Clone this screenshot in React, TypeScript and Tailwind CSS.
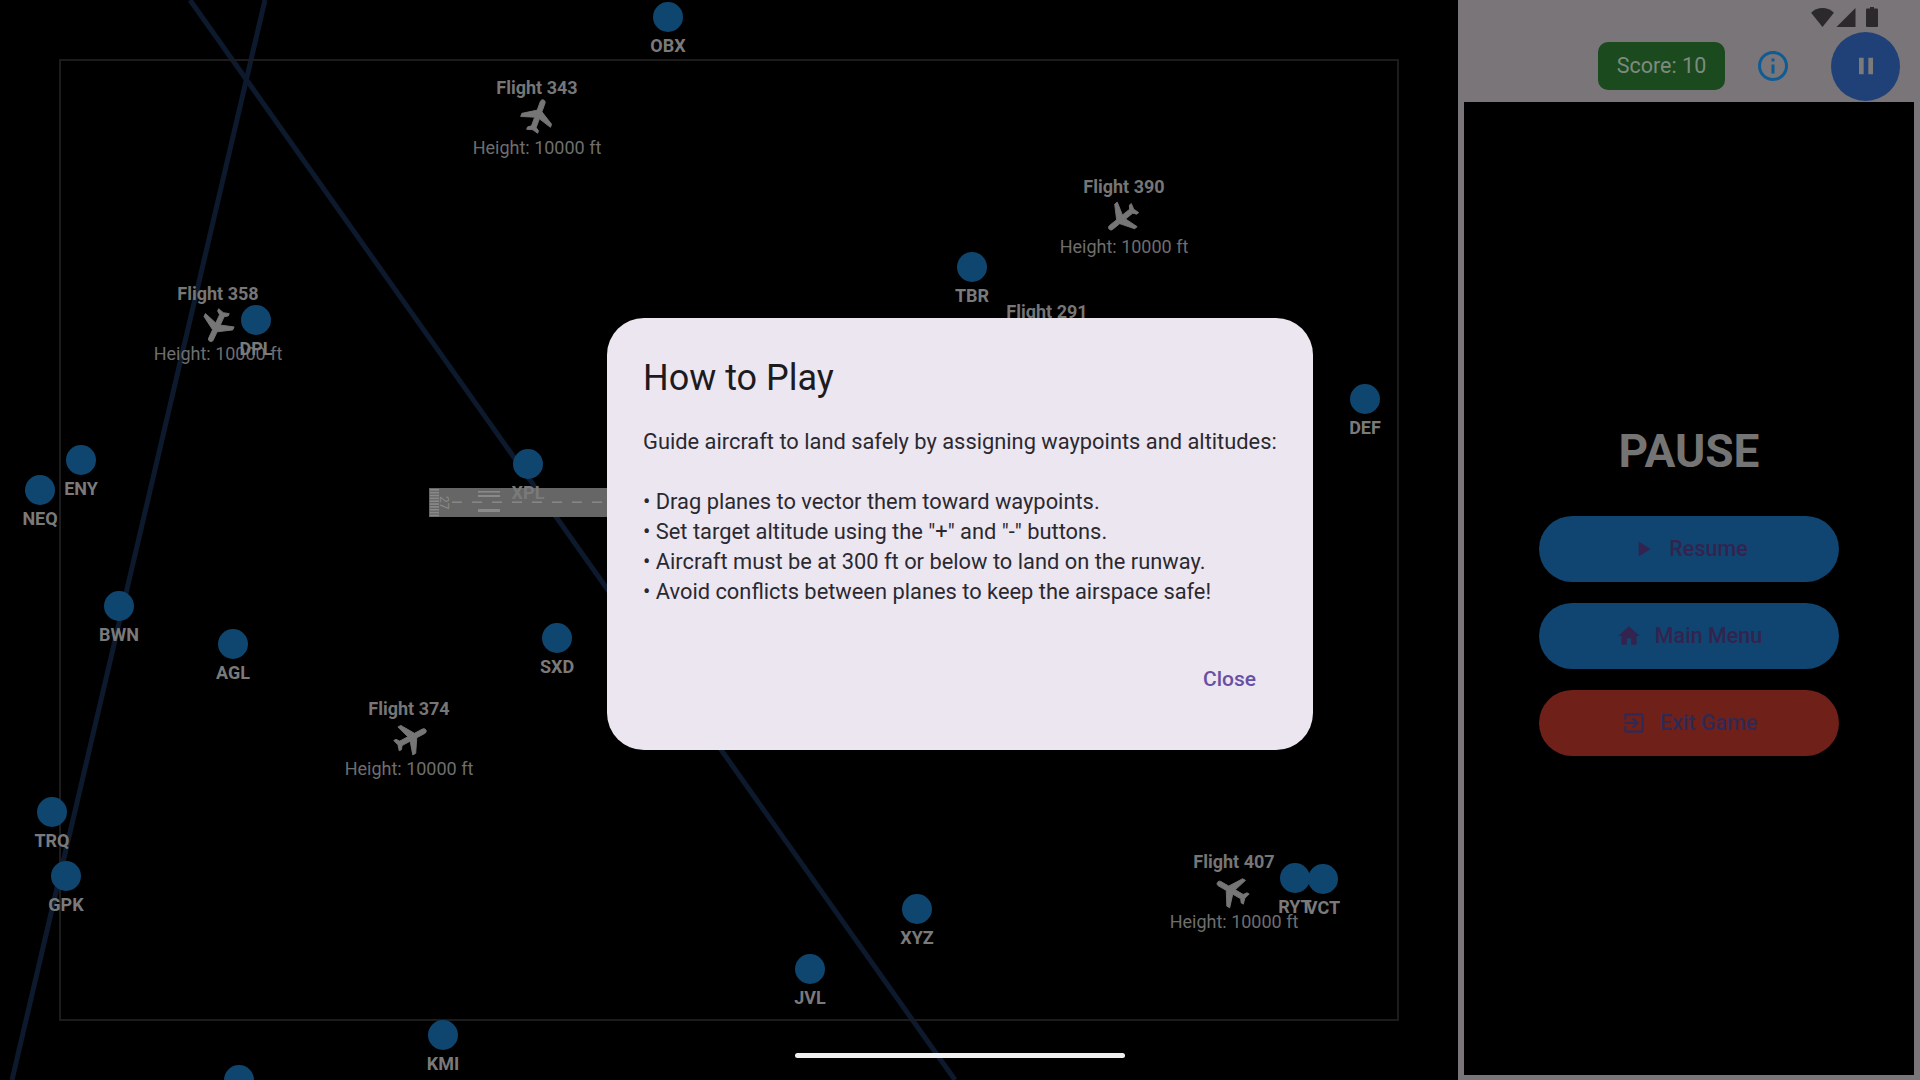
import React from "react";

const waypoints: [string, number, number][] = [
  ["OBX", 668, 17], ["TBR", 972, 267], ["DPL", 256, 320], ["DEF", 1365, 399], ["ENY", 81, 460],
  ["NEQ", 40, 490], ["XPL", 528, 464], ["BWN", 119, 606], ["AGL", 233, 644], ["SXD", 557, 638],
  ["TRQ", 52, 812], ["GPK", 66, 876], ["RYT", 1295, 878], ["VCT", 1323, 879], ["XYZ", 917, 909],
  ["JVL", 810, 969], ["KMI", 443, 1035], ["", 239, 1080],
];

const flights: [string, number, number, number][] = [
  ["Flight 343", 537, 88, 20], ["Flight 390", 1124, 187, 231], ["Flight 358", 218, 294, 205],
  ["Flight 374", 409, 709, 62], ["Flight 407", 1234, 862, 300], ["Flight 291", 1047, 312, 0],
];

const PLANE = "M21 16v-2l-8-5V3.5c0-.83-.67-1.5-1.5-1.5S10 2.67 10 3.5V9l-8 5v2l8-2.5V19l-2 1.5V22l3.5-1 3.5 1v-1.5L13 19v-5.5l8 2.5z";

function Waypoint({ name, x, y }: { name: string; x: number; y: number }) {
  return (
    <div className="absolute flex w-[80px] -translate-x-1/2 flex-col items-center" style={{ left: x, top: y - 15 }}>
      <div className="h-[30px] w-[30px] rounded-full bg-[#0f4670]" />
      <div className="mt-[3.5px] text-[18px] leading-[19px] font-bold text-[#7a7a7a]">{name}</div>
    </div>
  );
}

function Flight({ name, x, y, rot }: { name: string; x: number; y: number; rot: number }) {
  return (
    <div className="absolute flex w-[180px] -translate-x-1/2 flex-col items-center" style={{ left: x, top: y - 10 }}>
      <div className="text-[18px] leading-[20px] font-bold text-[#767676]">{name}</div>
      <svg viewBox="-0.5 1.5 24 24" className="h-[40px] w-[40px] fill-[#767676] stroke-[#767676]" strokeWidth="0.5" style={{ transform: `rotate(${rot}deg)` }}>
        <path d={PLANE} />
      </svg>
      <div className="text-[18px] leading-[20px] text-[#6e6e6e]">Height: 10000 ft</div>
    </div>
  );
}

function Runway() {
  const stripes = [0, 1, 2, 3, 4, 5, 6, 7, 8, 9];
  const dashes = [0, 1, 2, 3, 4, 5, 6, 7];
  return (
    <svg className="absolute top-[488px] left-[429px] h-[29px] w-[180px]" viewBox="0 0 180 29">
      <rect width="180" height="29" fill="#666666" />
      {stripes.map((i) => (
        <rect key={i} x="1" y={1 + i * 2.85} width="9" height="1.6" fill="#8a8a8a" />
      ))}
      <text x="0" y="0" transform="translate(11 8) rotate(90)" fontSize="12" fontFamily="Roboto" fill="#8a8a8a">27</text>
      {dashes.map((i) => (
        <rect key={i} x={23 + i * 20} y="13.5" width="10" height="1.4" fill="#8a8a8a" />
      ))}
      <rect x="49" y="3" width="22" height="1.6" fill="#8a8a8a" />
      <rect x="49" y="7" width="22" height="2" fill="#8a8a8a" />
      <rect x="49" y="21" width="22" height="3" fill="#8a8a8a" />
    </svg>
  );
}

function Btn({ bg, text, label, d }: { bg: string; text: string; label: string; d: string }) {
  return (
    <div className={`flex h-[66px] w-[300px] items-center justify-center gap-[13px] rounded-full ${bg} ${text}`}>
      <svg viewBox="0 0 24 24" className="h-[26px] w-[26px] fill-current"><path d={d} /></svg>
      <span className="pt-[1px] text-[21.5px] font-medium">{label}</span>
    </div>
  );
}

export default function App() {
  return (
    <div className="flex h-[1080px] w-[1920px] overflow-hidden bg-black font-['Roboto',sans-serif]">
      <div className="relative h-full w-[1458px] overflow-hidden bg-black">
        <svg className="absolute inset-0 h-full w-full" viewBox="0 0 1458 1080">
          <line x1="190" y1="0" x2="955" y2="1080" stroke="#0d1a2d" strokeWidth="5" />
          <line x1="265" y1="0" x2="12" y2="1080" stroke="#0d1a2d" strokeWidth="5" />
        </svg>
        <div className="absolute top-[59px] left-[59px] h-[962px] w-[1340px] border-2 border-[#1c1c1c]" />
        <Runway />
        {flights.map(([n, x, y, r]) => <Flight key={n} name={n} x={x} y={y} rot={r} />)}
        {waypoints.map(([n, x, y]) => <Waypoint key={n + x} name={n} x={x} y={y} />)}
      </div>

      <div className="flex h-full w-[462px] flex-col bg-[#797579] px-[6px] pb-[5px]">
        <div className="relative flex h-[102px] items-center justify-end pt-[30px]">
          <div className="absolute top-[7px] right-[36px] flex items-center gap-[2px]">
            <svg viewBox="0 0 24 20" className="h-[19px] w-[23px] fill-[#2b292b]"><path d="M12 20L0 5c3-3 7.5-5 12-5s9 2 12 5z" /></svg>
            <svg viewBox="0 0 20 20" className="h-[19px] w-[20px] fill-[#2b292b]"><path d="M20 0v20H0z" /></svg>
            <svg viewBox="0 0 12 20" className="ml-[8px] h-[20px] w-[12px] fill-[#2b292b]"><path d="M4 0h4v1.500h3a1 1 0 0 1 1 1V19a1 1 0 0 1-1 1H1a1 1 0 0 1-1-1V2.500a1 1 0 0 1 1-1h3z" /></svg>
          </div>
          <div className="flex h-[48px] w-[127px] items-center justify-center rounded-[10px] bg-[#1b4a1e] text-[21.5px] text-[#7f8a7f]">Score: 10</div>
          <svg viewBox="0 0 24 24" className="mr-[40px] ml-[30px] h-[36px] w-[36px] fill-[#0f5c94]">
            <path d="M11 7h2v2h-2zm0 4h2v6h-2zm1-9C6.48 2 2 6.480 2 12s4.480 10 10 10 10-4.480 10-10S17.520 2 12 2zm0 18c-4.410 0-8-3.590-8-8s3.590-8 8-8 8 3.590 8 8-3.590 8-8 8z" />
          </svg>
          <div className="mr-[14px] flex h-[69px] w-[69px] items-center justify-center rounded-full bg-[#1f4178]">
            <svg viewBox="0 0 24 24" className="h-[28px] w-[28px] fill-[#7b7b7b]"><path d="M6 5h4v14H6zm8 0h4v14h-4z" /></svg>
          </div>
        </div>
        <div className="flex flex-1 flex-col items-center justify-center bg-black">
          <div className="mb-[36px] text-[46px] leading-[58px] font-bold text-[#747474]">PAUSE</div>
          <div className="flex flex-col gap-[21px]">
            <Btn bg="bg-[#0f4570]" text="text-[#35234f]" label="Resume" d="M8 5v14l11-7z" />
            <Btn bg="bg-[#0f4570]" text="text-[#35234f]" label="Main Menu" d="M10 20v-6h4v6h5v-8h3L12 3 2 12h3v8z" />
            <Btn bg="bg-[#6f2018]" text="text-[#2f2a55]" label="Exit Game" d="M10.090 15.590L11.500 17l5-5-5-5-1.410 1.410L12.670 11H3v2h9.670l-2.580 2.590zM19 3H5c-1.110 0-2 .9-2 2v4h2V5h14v14H5v-4H3v4c0 1.100.89 2 2 2h14c1.100 0 2-.9 2-2V5c0-1.100-.9-2-2-2z" />
          </div>
        </div>
      </div>

      <div className="absolute inset-0 flex h-[1080px] w-[1920px] items-center justify-center pb-[12px]">
        <div className="flex h-[432px] w-[706px] flex-col rounded-[37px] bg-[#ece6f0] px-[36px] pt-[38px] pb-[55px]">
          <div className="text-[36px] leading-[44px] text-[#1d1b20]">How to Play</div>
          <div className="mt-[27px] text-[21.85px] leading-[30px] text-[#2b2930]">
            <div>Guide aircraft to land safely by assigning waypoints and altitudes:</div>
            <div className="h-[30px]" />
            <div>• Drag planes to vector them toward waypoints.</div>
            <div>• Set target altitude using the "+" and "-" buttons.</div>
            <div>• Aircraft must be at 300 ft or below to land on the runway.</div>
            <div>• Avoid conflicts between planes to keep the airspace safe!</div>
          </div>
          <div className="mt-auto flex justify-end pr-[21px] text-[21px] font-medium text-[#6750a4]">Close</div>
        </div>
      </div>

      <div className="absolute top-[1053px] left-[795px] h-[5px] w-[330px] rounded-full bg-[#f0f0f0]" />
    </div>
  );
}
